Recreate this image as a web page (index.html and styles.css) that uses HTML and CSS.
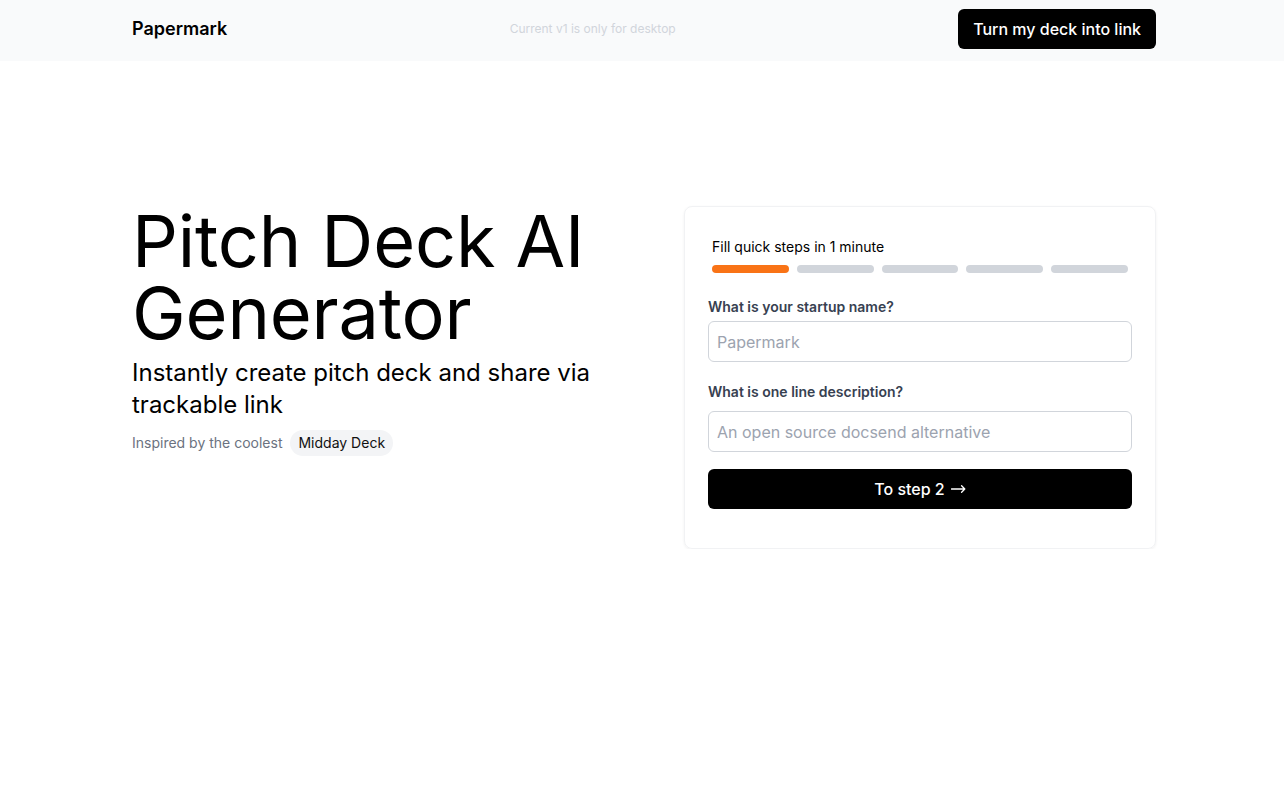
FILE: index.html
```html
<!DOCTYPE html>
<html lang="en">
<head>
<meta charset="utf-8">
<title>Papermark - Pitch Deck AI Generator</title>
<link rel="stylesheet" href="styles.css">
</head>
<body>
<header class="topbar">
  <div class="container topbar-inner">
    <div class="logo">Papermark</div>
    <div class="notice">Current v1 is only for desktop</div>
    <a class="btn-dark btn-header" href="#">Turn my deck into link</a>
  </div>
</header>
<main class="container hero">
  <section class="hero-left">
    <h1 class="title">Pitch Deck AI Generator</h1>
    <p class="subtitle">Instantly create pitch deck and share via trackable link</p>
    <div class="inspired">
      <span class="inspired-text">Inspired by the coolest</span>
      <span class="pill">Midday Deck</span>
    </div>
  </section>
  <section class="card">
    <div class="progress">
      <div class="progress-label">Fill quick steps in 1 minute</div>
      <div class="bars">
        <span class="bar active"></span>
        <span class="bar"></span>
        <span class="bar"></span>
        <span class="bar"></span>
        <span class="bar"></span>
      </div>
    </div>
    <form class="form">
      <label class="label label-first" for="name">What is your startup name?</label>
      <input class="input input-first" id="name" type="text" placeholder="Papermark">
      <label class="label label-second" for="desc">What is one line description?</label>
      <input class="input input-second" id="desc" type="text" placeholder="An open source docsend alternative">
      <button class="btn-dark btn-step" type="button">To step 2<svg class="arrow" width="15" height="10" viewBox="0 0 15 10" aria-hidden="true"><path d="M0.5 5H13.8M10.6 1.8L13.8 5L10.6 8.2" fill="none" stroke="#fff" stroke-width="1.3" stroke-linecap="round" stroke-linejoin="round"/></svg></button>
    </form>
  </section>
</main>
</body>
</html>
```
FILE: styles.css
```css
* { box-sizing: border-box; }
html, body { margin: 0; padding: 0; }
body {
  font-family: Inter, "Noto Sans", sans-serif;
  color: #000;
  background: #fff;
  -webkit-font-smoothing: antialiased;
}
.container {
  width: 1024px;
  margin: 0 auto;
  position: relative;
  left: 2px;
}
.topbar {
  background: #f9fafb;
  height: 61px;
  padding-top: 9px;
}
.topbar-inner {
  display: flex;
  align-items: center;
  justify-content: space-between;
  height: 40px;
}
.logo {
  font-size: 18px;
  line-height: 28px;
  font-weight: 600;
  color: #000;
}
.notice {
  font-size: 12px;
  line-height: 16px;
  color: #d1d5db;
}
.btn-dark {
  display: inline-flex;
  align-items: center;
  justify-content: center;
  background: #000;
  color: #fff;
  border: 0;
  border-radius: 6px;
  font-family: inherit;
  font-size: 16px;
  font-weight: 500;
  text-decoration: none;
  height: 40px;
  white-space: nowrap;
}
.btn-header {
  padding: 0 15px;
}
.hero {
  display: grid;
  grid-template-columns: 472px 472px;
  column-gap: 80px;
  align-items: start;
  padding-top: 144px;
}
.title {
  margin: 0;
  font-size: 72px;
  line-height: 72px;
  font-weight: 400;
  letter-spacing: -0.15px;
}
.subtitle {
  margin: 8px 0 0;
  font-size: 24px;
  line-height: 32px;
  font-weight: 400;
}
.inspired {
  display: flex;
  align-items: center;
  gap: 8px;
  margin-top: 9px;
}
.inspired-text {
  font-size: 14px;
  line-height: 20px;
  color: #6b7280;
}
.pill {
  font-size: 14px;
  line-height: 20px;
  padding: 3px 8px;
  border-radius: 9999px;
  background: #f3f4f6;
  color: #111;
}
.card {
  margin-top: 1px;
  border: 1px solid #f1f2f4;
  border-radius: 8px;
  box-shadow: 0 1px 3px rgba(0,0,0,0.06);
  padding: 24px 23px 39px;
}
.progress {
  padding: 6px 4px 0;
}
.progress-label {
  font-size: 14px;
  line-height: 20px;
  color: #000;
}
.bars {
  display: flex;
  gap: 8px;
  margin-top: 8px;
}
.bar {
  flex: 1;
  height: 8px;
  border-radius: 9999px;
  background: #d1d5db;
}
.bar.active { background: #f97316; }
.form {
  display: flex;
  flex-direction: column;
}
.label {
  font-size: 14px;
  line-height: 20px;
  font-weight: 600;
  color: #374151;
}
.label-first { margin-top: 24px; }
.label-second { margin-top: 20px; }
.input {
  height: 41px;
  border: 1px solid #d1d5db;
  border-radius: 6px;
  padding: 0 8px;
  font-family: inherit;
  font-size: 16px;
  color: #111;
  background: #fff;
  outline: none;
}
.input::placeholder { color: #9ca3af; }
.input-first { margin-top: 4px; }
.input-second { margin-top: 9px; }
.btn-step {
  margin-top: 17px;
  width: 100%;
  cursor: pointer;
}
.arrow {
  margin-left: 6px;
  margin-top: -1px;
}
```
